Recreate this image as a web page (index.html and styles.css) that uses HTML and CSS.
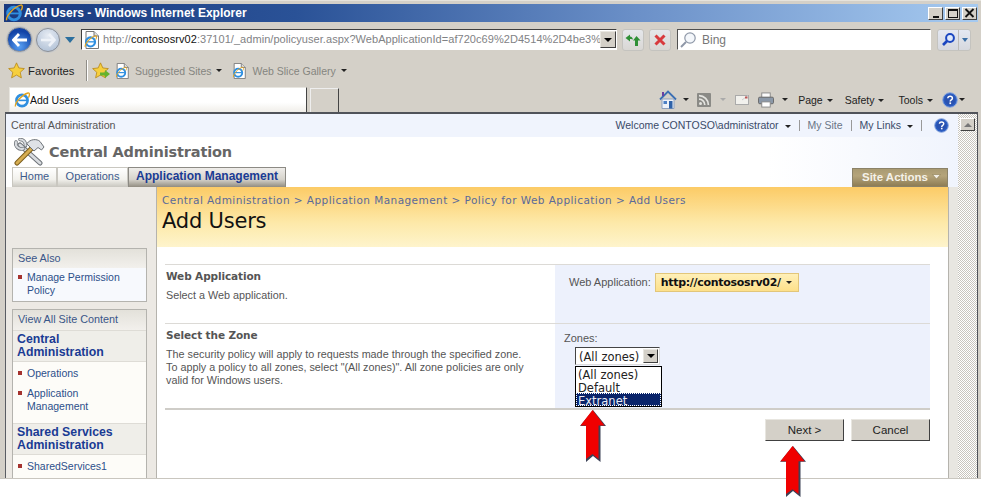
FILE: index.html
```html
<!DOCTYPE html>
<html lang="en">
<head>
<meta charset="utf-8">
<title>Add Users - Windows Internet Explorer</title>
<link rel="stylesheet" href="styles.css">
</head>
<body>
<svg class="defs" width="0" height="0" aria-hidden="true">
  <defs>
    <symbol id="ie" viewBox="0 0 16 16">
      <ellipse cx="8" cy="8.500" rx="5.600" ry="5.600" fill="none" stroke="#2f8fe0" stroke-width="2.600"/>
      <rect x="3" y="7.600" width="10" height="1.600" fill="#2f8fe0"/>
      <path d="M1.500 14.500C.5 11 8 2.500 14 1c2-.4 1.600 2.600.4 4.600" fill="none" stroke="#e3a520" stroke-width="1.300"/>
    </symbol>
    <symbol id="page" viewBox="0 0 16 18">
      <path d="M2 .5h8l4.500 4.500V17.500H2z" fill="#fff" stroke="#777"/>
      <path d="M10 .5V5h4.500" fill="#ddd" stroke="#777"/>
      <use href="#ie" x="0" y="4" width="13" height="13"/>
    </symbol>
    <symbol id="star" viewBox="0 0 16 16">
      <path d="M8 .8l2.200 4.800 5.200.6-3.900 3.500 1.100 5.200L8 12.300l-4.600 2.600 1.100-5.200L.6 6.200l5.200-.6z" fill="#f6cf3e" stroke="#b98a1c" stroke-width=".8"/>
    </symbol>
    <symbol id="help" viewBox="0 0 16 16">
      <circle cx="8" cy="8" r="7.300" fill="#2c5fc4" stroke="#8ea9dd"/>
      <circle cx="8" cy="8" r="5.400" fill="#2a52b0"/>
      <path d="M5.800 6.200c.2-2.600 4.600-2.600 4.600 0 0 1.700-2.200 1.600-2.200 3.300" fill="none" stroke="#fff" stroke-width="1.500"/>
      <rect x="7.400" y="10.400" width="1.700" height="1.700" fill="#fff"/>
    </symbol>
    <symbol id="redarrow" viewBox="0 0 26 52" preserveAspectRatio="none">
      <path d="M13 0L26 16H20.500V52L13 46 6 52V16H0z" fill="#3c4257"/>
      <path d="M12.500 0L24.500 15.500H18.500V49L12.500 44 6 49V15.500H.5z" fill="#f00000"/>
    </symbol>
  </defs>
</svg>

<div class="window">
  <header class="titlebar">
    <svg class="ti" width="18" height="18"><use href="#ie"/></svg>
    <span class="titletext">Add Users - Windows Internet Explorer</span>
    <div class="winbtns">
      <span class="wb"><i class="wb-min"></i></span><span class="wb"><i class="wb-max"></i></span><span class="wb wb-x"><svg width="11" height="10" viewBox="0 0 11 10"><path d="M1.500 1l8 8M9.500 1l-8 8" stroke="#111" stroke-width="1.800"/></svg></span>
    </div>
  </header>

  <div class="navrow">
    <div class="navorbs">
      <span class="orb orb-back"><svg width="16" height="14" viewBox="0 0 16 14"><path d="M7 1L1.500 7 7 13M2 7h13" fill="none" stroke="#fff" stroke-width="2.800"/></svg></span>
      <span class="orb orb-fwd"><svg width="16" height="14" viewBox="0 0 16 14"><path d="M9 1l5.500 6L9 13M14 7H1" fill="none" stroke="#eef2f8" stroke-width="2.600"/></svg></span>
      <span class="orbdrop"></span>
    </div>
    <div class="address">
      <svg class="addr-ic" width="16" height="18"><use href="#page"/></svg>
      <span class="url">http://<b>contososrv02</b>:37101/_admin/policyuser.aspx?WebApplicationId=af720c69%2D4514%2D4be3%</span>
      <span class="combo"><i></i></span>
    </div>
    <span class="tbtn"><svg width="16" height="14" viewBox="0 0 16 14"><path d="M.5 5L5 1.500V3.500C6.500 3.500 7.500 4.500 8 6.500 7 5.800 6 5.800 5 6V8.500z" fill="#2e8f36"/><path d="M15.500 7.500L11.500 3 8 7.500H10V13H13V7.500z" fill="#2e8f36"/></svg></span>
    <span class="tbtn"><svg width="14" height="14" viewBox="0 0 14 14"><path d="M2.500 2.500l9 9M11.500 2.500l-9 9" stroke="#d83a3e" stroke-width="3"/></svg></span>
    <div class="search">
      <svg width="18" height="18" viewBox="0 0 18 18"><circle cx="11" cy="7" r="5.200" fill="#f4f7fb" stroke="#8f98a8" stroke-width="1.200"/><path d="M7 11l-5 5" stroke="#8f98a8" stroke-width="2"/></svg>
      <span>Bing</span>
    </div>
    <div class="searchbtn">
      <span class="sb-go"><svg width="15" height="15" viewBox="0 0 15 15"><circle cx="9" cy="6" r="3.900" fill="#dfeafc" stroke="#1b46c0" stroke-width="2"/><path d="M6 9l-4 4" stroke="#1b46c0" stroke-width="2.600"/></svg></span>
      <span class="sb-drop"><i></i></span>
    </div>
  </div>

  <div class="favrow">
    <svg class="fav-star" width="17" height="17"><use href="#star"/></svg>
    <span class="fav-label">Favorites</span>
    <span class="fav-sep"></span>
    <span class="fav-add"><svg width="17" height="17"><use href="#star"/></svg><svg class="fav-arrow" width="10" height="8" viewBox="0 0 10 8"><path d="M0 2.500h5V0l5 4-5 4V5.500H0z" fill="#65b32e"/></svg></span>
    <span class="fav-item"><svg width="15" height="16"><use href="#page"/></svg>Suggested Sites<i class="caret"></i></span>
    <span class="fav-item"><svg width="15" height="16"><use href="#page"/></svg>Web Slice Gallery<i class="caret"></i></span>
  </div>

  <div class="tabrow">
    <div class="tab-active"><svg width="16" height="16"><use href="#ie"/></svg>Add Users</div>
    <div class="tab-new"></div>
    <div class="cmdbar">
      <svg class="c-ic ic-home" width="18" height="19" viewBox="0 0 18 19"><path d="M1 9.500L9 1.500l8 8" fill="none" stroke="#3b6fb4" stroke-width="1.800"/><rect x="3" y="2" width="2" height="4" fill="#6a3fa0"/><path d="M3 9h12v9.500H3z" fill="#eef2f8" stroke="#8ea0bd"/><rect x="10" y="11" width="3.500" height="7.500" fill="#2f62a8"/><rect x="4.500" y="11" width="3.500" height="3" fill="#4d80c4"/></svg><i class="caret cmd-c1"></i>
      <svg class="c-ic" width="14" height="14" viewBox="0 0 14 14"><rect width="14" height="14" rx="1" fill="#8a8a86"/><circle cx="3.500" cy="10.500" r="1.500" fill="#e4e4e0"/><path d="M2 6.200a5.800 5.800 0 0 1 5.800 5.800M2 2.600A9.400 9.400 0 0 1 11.400 12" fill="none" stroke="#e4e4e0" stroke-width="1.700"/></svg><i class="caret caret-off cmd-c2"></i>
      <svg class="c-ic cmd-mail" width="14" height="10" viewBox="0 0 14 10"><rect x=".5" y=".5" width="13" height="9" fill="#f2f1ed" stroke="#aaa"/><path d="M7 5l6-4.500" stroke="#ccc"/><rect x="10" y="1.500" width="2.500" height="2" fill="#b55"/></svg>
      <svg class="c-ic cmd-print" width="16" height="16" viewBox="0 0 17 16"><rect x="4" y=".5" width="9" height="5" fill="#fbfbfb" stroke="#888"/><rect x=".5" y="5" width="16" height="7" rx="1.500" fill="#8b98a8" stroke="#666"/><rect x="4" y="10" width="9" height="5.500" fill="#fff" stroke="#888"/></svg><i class="caret cmd-c3"></i>
      <span class="cmd">Page<i class="caret"></i></span>
      <span class="cmd cmd-safety">Safety<i class="caret"></i></span>
      <span class="cmd cmd-last">Tools<i class="caret"></i></span>
      <svg class="c-ic" width="16" height="16"><use href="#help"/></svg><i class="caret cmd-c4"></i>
    </div>
  </div>

  <div class="viewport">
    <div class="page">
      <div class="topbar">
        <span class="crumb-top">Central Administration</span>
        <div class="toplinks">
          <span>Welcome CONTOSO\administrator<i class="caret topcaret"></i></span>
          <span class="pipe"></span>
          <span class="muted">My Site</span>
          <span class="pipe"></span>
          <span>My Links<i class="caret topcaret"></i></span>
          <span class="pipe"></span>
          <svg class="tophelp" width="15" height="15"><use href="#help"/></svg>
        </div>
      </div>
      <div class="brand">
        <svg width="32" height="28" viewBox="0 0 32 28">
          <g fill="none" stroke-linecap="round">
            <path d="M7 7L27 25" stroke="#6d7278" stroke-width="5"/>
            <path d="M7 7L27 25" stroke="#d9dce0" stroke-width="3"/>
            <path d="M3 4a5.500 5.500 0 0 0 7.500 6.500" stroke="#6d7278" stroke-width="3.500"/>
            <path d="M3 4a5.500 5.500 0 0 0 7.500 6.500" stroke="#d9dce0" stroke-width="2"/>
            <path d="M7 1.500a5.500 5.500 0 0 1 5.500 6" stroke="#6d7278" stroke-width="3.500"/>
            <path d="M7 1.500a5.500 5.500 0 0 1 5.500 6" stroke="#d9dce0" stroke-width="2"/>
            <path d="M4 25L19 10" stroke="#7c5d1c" stroke-width="5"/>
            <path d="M4 25L19 10" stroke="#d6ad52" stroke-width="3"/>
          </g>
          <path d="M14 5.500C17 1 24 .5 27 3.500l4 5.500-2.500 3-3.500-2.500-4 3.500-7-7z" fill="#dfe2e6" stroke="#6d7278"/>
        </svg>
        <span class="brandname">Central Administration</span>
      </div>
      <div class="tabs">
        <nav class="tablist">
          <a class="ptab ptab-home">Home</a>
          <a class="ptab ptab-ops">Operations</a>
          <a class="ptab ptab-on">Application Management</a>
        </nav>
        <div class="siteactions">Site Actions<svg width="9" height="6" viewBox="0 0 9 6"><path d="M.5.500h8L4.500 5z" fill="#f1eee4" stroke="#8b7b50" stroke-width=".6"/></svg></div>
      </div>
      <div class="columns">
        <aside class="side">
          <div class="sidebox box-see">
            <div class="boxhead">See Also</div>
            <ul class="links links-see">
              <li>Manage Permission Policy</li>
            </ul>
          </div>
          <div class="sidebox box-view">
            <div class="boxhead">View All Site Content</div>
            <div class="group">Central Administration</div>
            <ul class="links">
              <li>Operations</li>
              <li>Application Management</li>
            </ul>
            <div class="group">Shared Services Administration</div>
            <ul class="links">
              <li>SharedServices1</li>
            </ul>
          </div>
        </aside>
        <main class="main">
          <div class="hero">
            <div class="crumbs">Central Administration &gt; Application Management &gt; Policy for Web Application &gt; Add Users</div>
            <h1>Add Users</h1>
          </div>
          <div class="form">
            <section class="row row-1">
              <div class="desc">
                <h2>Web Application</h2>
                <p>Select a Web application.</p>
              </div>
              <div class="ctrl ctrl-1">
                <span>Web Application:</span>
                <span class="picker"><b>http://contososrv02/</b><i class="caret"></i></span>
              </div>
            </section>
            <section class="row row-2">
              <div class="desc">
                <h2>Select the Zone</h2>
                <p>The security policy will apply to requests made through the specified zone.<br>To apply a policy to all zones, select "(All zones)". All zone policies are only<br>valid for Windows users.</p>
              </div>
              <div class="ctrl ctrl-2">
                <span>Zones:</span>
                <div class="select"><span class="select-val">(All zones)</span><span class="combo"><i></i></span>
                  <ul class="options">
                    <li>(All zones)</li>
                    <li>Default</li>
                    <li class="sel">Extranet</li>
                  </ul>
                </div>
              </div>
            </section>
            <div class="actions">
              <button class="btn" type="button">Next &gt;</button>
              <button class="btn" type="button">Cancel</button>
            </div>
          </div>
        </main>
        <div class="gutter"></div>
      </div>
    </div>
    <div class="scrollbar"><span class="sbup"><i></i></span></div>
  </div>
</div>
<svg class="arrow arrow-a" width="26" height="52"><use href="#redarrow"/></svg>
<svg class="arrow arrow-b" width="26" height="51"><use href="#redarrow"/></svg>
</body>
</html>
```
FILE: styles.css
```css
* { box-sizing: border-box; }
html, body { margin: 0; padding: 0; }
body { position: relative; width: 981px; height: 497px; overflow: hidden; background: #fff; font-family: "Liberation Sans", Arial, sans-serif; font-size: 11px; color: #333; }
.defs { position: absolute; }
i { display: block; }
ul { list-style: none; margin: 0; padding: 0; }

.window { height: 479px; background: #d4d0c8; padding-top: 3px; border-top: 1px solid #e6e3dc; border-bottom: 1px solid #c9c6bf; overflow: hidden; }

.titlebar { height: 18px; margin: 0 3px 1px 4px; display: flex; align-items: center; background: linear-gradient(90deg, #1a3a7f 0%, #2a5297 30%, #6b90c8 65%, #a6caf0 100%); color: #fff; }
.ti { margin-left: 1px; margin-right: 1px; }
.titletext { font: bold 12px "Liberation Sans", sans-serif; }
.winbtns { margin-left: auto; margin-right: 1px; display: flex; gap: 2px; }
.wb { height: 13px; background: #d4d0c8; border: 1px solid; border-color: #fff #404040 #404040 #fff; display: flex; align-items: center; justify-content: center; width: 15px; }
.wb-min { width: 6px; height: 2px; background: #111; margin-top: 7px; }
.wb-max { width: 10px; height: 9px; border: 1px solid #111; border-top-width: 2px; }

.navrow { height: 33px; display: flex; align-items: center; padding-left: 7px; }
.navorbs { display: flex; align-items: center; width: 74px; }
.orb { width: 25px; height: 25px; border-radius: 50%; display: flex; align-items: center; justify-content: center; border: 1px solid #8a8f98; }
.orb-back { background: radial-gradient(circle at 50% 80%, #58a0f4, #1243a6 70%); box-shadow: 0 0 0 1px #bfc3c8; }
.orb-fwd { width: 24px; height: 24px; background: radial-gradient(circle at 50% 30%, #e6ebf3, #a9bbd2); margin-left: 4px; box-shadow: 0 0 0 1px #c8cacc; }
.orbdrop { width: 0; height: 0; margin-left: 5px; border: 5px solid transparent; border-top: 6px solid #2c6f9e; margin-top: 6px; }
.address { width: 536px; height: 21px; background: #fff; border: 1px solid; border-color: #404040 #fff #fff #404040; display: flex; align-items: center; padding-left: 2px; overflow: hidden; }
.addr-ic { flex: none; margin-right: 3px; }
.url { flex: 1; min-width: 0; white-space: nowrap; overflow: hidden; font: 11px "Liberation Sans", sans-serif; color: #7f8285; letter-spacing: .05px; line-height: 17px; }
.url b { font-weight: normal; color: #111; }
.combo { flex: none; width: 16px; height: 17px; background: #d4d0c8; border: 1px solid; border-color: #e8e6e0 #404040 #404040 #e8e6e0; display: flex; align-items: center; justify-content: center; }
.combo i { width: 0; height: 0; border: 4px solid transparent; border-top: 4px solid #000; border-bottom: 0; }
.tbtn { width: 22px; height: 22px; margin-left: 5px; border: 1px solid #c4c3bf; border-radius: 3px; background: linear-gradient(#e5e7eb, #d9d7d4); display: flex; align-items: center; justify-content: center; }
.search { width: 254px; height: 21px; margin-left: 6px; background: #fff; border: 1px solid; border-color: #505050 #fff #fff #505050; display: flex; align-items: center; gap: 5px; padding-left: 1px; font: 12px "Liberation Sans", sans-serif; color: #777; }
.searchbtn { margin-left: 6px; width: 34px; height: 22px; display: flex; border: 1px solid #c4c3bf; border-radius: 3px; background: linear-gradient(#e4e8f2, #d6d8de); }
.sb-go { width: 21px; display: flex; align-items: center; justify-content: center; border-right: 1px solid #bdbcb9; }
.sb-drop { flex: 1; display: flex; align-items: center; justify-content: center; }
.sb-drop i { width: 0; height: 0; border: 3px solid transparent; border-top: 4px solid #3a6ea5; border-bottom: 0; }

.favrow { height: 27px; margin-top: 1px; display: flex; align-items: center; padding-left: 8px; font: 10.500px "Liberation Sans", sans-serif; color: #222; }
.fav-label { margin-left: 3px; width: 58px; font-size: 11.300px; }
.fav-sep { width: 1px; height: 21px; background: #8f8d87; box-shadow: 1px 0 0 #fff; }
.fav-add { position: relative; margin-left: 5px; width: 22px; display: flex; }
.fav-arrow { position: absolute; left: 8px; top: 8px; }
.fav-item { display: flex; align-items: center; gap: 5px; color: #85857f; white-space: nowrap; margin-left: 1px; margin-right: 9px; }
.caret { display: inline-block; width: 0; height: 0; border: 3px solid transparent; border-top: 3px solid #222; border-bottom: 0; vertical-align: middle; }
.caret-off { border-top-color: #aaa; }

.tabrow { height: 25px; margin-top: 3px; display: flex; align-items: flex-end; padding-left: 9px; }
.tab-active { width: 298px; height: 25px; background: linear-gradient(#fff, #fff 60%, #f0eee9); border: 1px solid #e8e6e0; border-right: 1px solid #444; border-bottom: 0; display: flex; align-items: center; padding-left: 4px; font: 10.500px "Liberation Sans", sans-serif; color: #111; }
.tab-new { width: 29px; height: 24px; margin-left: 3px; border-top: 1px solid #eee; border-left: 1px solid #eee; border-right: 1px solid #444; }
.cmdbar { margin-left: auto; height: 25px; display: flex; align-items: center; padding-right: 16px; font: 10.500px "Liberation Sans", sans-serif; color: #222; }
.cmdbar .caret { margin-left: 4px; }
.c-ic { flex: none; }
.cmdbar .cmd-c1 { margin-left: 6px; margin-right: 8px; }
.cmdbar .cmd-c2 { margin-left: 9px; margin-right: 9px; }
.cmd-mail { margin-right: 9px; }
.cmdbar .cmd-c3 { margin-left: 8px; margin-right: 10px; }
.cmd { margin-right: 12px; white-space: nowrap; }
.cmd-safety { margin-right: 14px; }
.cmd-last { margin-right: 9px; }
.cmdbar .cmd-c4 { margin-left: 1px; }

.viewport { height: 366px; margin-left: 5px; margin-right: 3px; border-top: 2px solid #50535a; border-left: 1px solid #5a5d63; display: flex; }
.page { width: 952px; flex: none; background: #fff; }
.topbar { height: 23px; background: #f0f4fd; display: flex; align-items: center; justify-content: space-between; padding: 0 9px 1px 5px; font-size: 10.500px; color: #555; }
.crumb-top { font-size: 10.700px; }
.toplinks { display: flex; align-items: center; color: #3a4a68; }
.muted { color: #6a7486; }
.pipe { width: 1px; height: 11px; background: #999; margin: 0 8px; }
.topcaret { margin-left: 6px; }
.tophelp { margin-left: 4px; }
.brand { height: 30px; display: flex; align-items: center; padding-left: 7px; gap: 4px; background: linear-gradient(90deg, #fff 80%, #f0f4fd 100%); }
.brandname { font: bold 14.500px "DejaVu Sans", sans-serif; color: #666; letter-spacing: -.15px; }
.tabs { height: 20px; display: flex; justify-content: space-between; align-items: flex-start; padding-left: 6px; padding-right: 10px; background: linear-gradient(90deg, #fff 80%, #f0f4fd 100%); }
.tablist { display: flex; height: 20px; }
.ptab { height: 20px; border: 1px solid #c9c7c0; border-bottom: 0; background: linear-gradient(#fff, #f2f1ec 60%, #c8c6bf); display: flex; align-items: center; justify-content: center; color: #3c5a8c; font-size: 11px; padding-bottom: 3px; }
.ptab-home { width: 45px; }
.ptab-ops { width: 71px; }
.ptab-on { width: 158px; background: linear-gradient(#efedea, #d6d3cb 60%, #918c80); border-color: #8c8a84; color: #1a3b94; font-weight: bold; font-size: 12px; white-space: nowrap; }
.siteactions { width: 96px; height: 19px; margin-top: 1px; background: linear-gradient(#a99a72, #b5a47a 40%, #8e7d55); border: 1px solid #8b8268; color: #f5f2e9; font-weight: bold; font-size: 11.500px; display: flex; align-items: center; justify-content: center; gap: 4px; padding: 0 0 1px 3px; white-space: nowrap; }

.columns { display: flex; height: 291px; overflow: hidden; }
.side { width: 151px; flex: none; background: #ece9e4; border-right: 1px solid #b5b3ad; padding: 61px 10px 0 6px; }
.sidebox { width: 135px; border: 1px solid #b4b3ae; margin-bottom: 7px; background: #f7f9fd; }
.box-view { background: #fdfcf8; }
.boxhead { height: 19px; padding: 0 0 2px 5px; display: flex; align-items: center; color: #3a5688; font-size: 10.800px; background: linear-gradient(#e3e1da, #f2f0ec); }
.box-view .boxhead { height: 20px; }
.links { padding: 5px 0 3px 4px; }
.links li { position: relative; padding: 0 6px 0 10px; line-height: 13px; margin: 0 0 7px; color: #2c4f8a; font-size: 10.500px; }
.links-see { padding: 3px 0 4px 4px; }
.links-see li { margin: 0; }
.links li::before { content: ""; position: absolute; left: 1px; top: 4px; width: 4px; height: 4px; background: #a5332f; }
.group { padding: 2px 20px 2px 4px; line-height: 13px; font-weight: bold; font-size: 12.300px; color: #1a3b94; background: #efeee9; border-top: 1px solid #dedcd6; border-bottom: 1px solid #dedcd6; }

.main { width: 791px; flex: none; }
.hero { height: 60px; padding: 5px 0 0 5px; background: linear-gradient(#fccb66, #fde9a9 60%, #fef4cc); }
.crumbs { font: 10.500px "DejaVu Sans", sans-serif; letter-spacing: .44px; color: #5a6a9a; line-height: 16px; white-space: nowrap; }
h1 { margin: 0; font: 21px "DejaVu Sans", sans-serif; color: #111; line-height: 27px; letter-spacing: -.2px; }
.form { padding: 17px 0 0 8px; width: 773px; }
.row { display: grid; grid-template-columns: 390px 375px; border-top: 1px solid #dcdad6; }
.row-1 { height: 59px; }
.row-2 { height: 87px; border-bottom: 2px solid #cfcdc8; }
.desc { padding: 4px 0 0 1px; }
.desc h2 { margin: 0; font: bold 10.500px "DejaVu Sans", sans-serif; color: #555; line-height: 14px; letter-spacing: -.1px; }
.desc p { margin: 6px 0 0; line-height: 13px; font-size: 10.800px; color: #555; white-space: nowrap; }
.ctrl { background: #edf1fc; font-size: 11px; color: #555; }
.ctrl-1 { display: flex; align-items: flex-start; padding: 8px 0 0 14px; gap: 4px; }
.ctrl-1 > span:first-child { padding-top: 3px; }
.picker { height: 19px; width: 144px; background: linear-gradient(#fff0b8, #fde08a); border: 1px solid #e2c67a; display: flex; align-items: center; padding-left: 5px; gap: 5px; }
.picker b { font: bold 11px "DejaVu Sans", sans-serif; color: #111; letter-spacing: -.3px; white-space: nowrap; }
.ctrl-2 { padding: 8px 0 0 9px; }
.ctrl-2 > span { display: block; line-height: 13px; }
.select { position: relative; width: 85px; height: 18px; margin: 2px 0 0 11px; border: 1px solid; border-color: #444 #ddd #ddd #444; background: #fff; display: flex; align-items: center; justify-content: space-between; padding-left: 3px; font: 11.500px "DejaVu Sans", sans-serif; color: #222; }
.select-val { padding-top: 1px; }
.select .combo { height: 14px; width: 15px; margin-right: 1px; }
.options { position: absolute; left: -1px; top: 18px; width: 87px; border: 1px solid #000; background: #fff; z-index: 2; }
.options li { height: 13px; padding-left: 2px; font: 11.500px/16px "DejaVu Sans", sans-serif; color: #222; }
.options .sel { background: #0a246a; color: #e8ecf8; outline: 1px dotted #fff; outline-offset: -1px; }
.actions { display: flex; justify-content: flex-end; gap: 7px; margin-top: 9px; width: 765px; }
.btn { width: 79px; height: 22px; padding: 0; background: #d4d0c8; border: 1px solid; border-color: #e8e6e0 #404040 #404040 #e8e6e0; font: 11.500px "Liberation Sans", sans-serif; color: #222; }
.gutter { flex: 1; background: #e8e6e1; border-left: 1px solid #b5b3ad; }

.scrollbar { flex: 1; background: repeating-conic-gradient(#fff 0 25%, #c8c5be 0 50%) 0 0 / 2px 2px; border-right: 1px solid #50535a; padding: 4px 2px 0; }
.sbup { display: flex; align-items: center; justify-content: center; width: 15px; height: 13px; background: #d4d0c8; border: 1px solid; border-color: #fff #404040 #404040 #fff; }
.sbup i { width: 0; height: 0; border: 4px solid transparent; border-bottom: 4px solid #777; border-top: 0; }

.arrow { position: absolute; z-index: 5; display: block; }
.arrow-a { left: 580px; top: 410px; }
.arrow-b { left: 780px; top: 446px; }
```
